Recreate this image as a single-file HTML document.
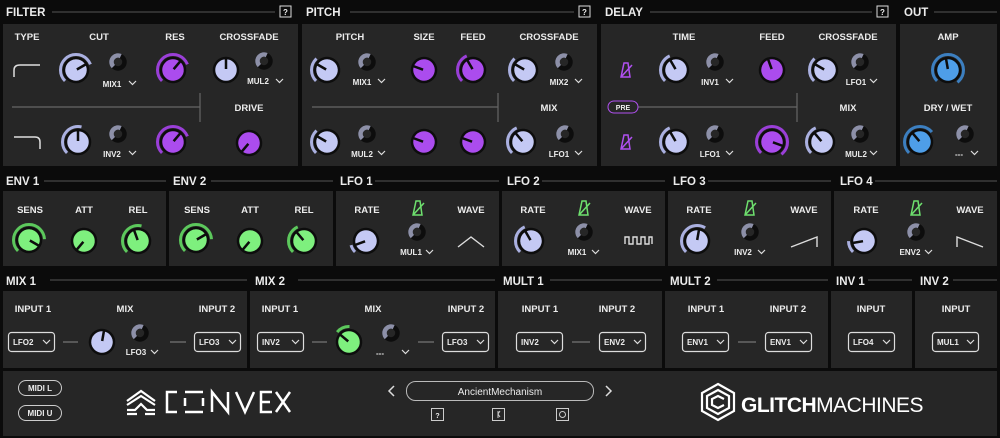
<!DOCTYPE html><html><head><style>body{margin:0;background:#0b0b0b}svg{display:block}text{font-family:"Liberation Sans",sans-serif;font-weight:bold;fill:#ececec}.l{font-size:9.5px;text-anchor:middle}.h{font-size:11.5px}.s{font-size:8px;text-anchor:middle}</style></head><body>
<svg width="1000" height="438" viewBox="0 0 1000 438">
<defs>
<g id="bL"><circle r="12" fill="#c4c9f4" stroke="#0d0d0d" stroke-width="2.5"/><line y1="-1" y2="-11" stroke="#0d0d0d" stroke-width="2.5"/></g>
<g id="bP"><circle r="12" fill="#ab4cee" stroke="#0d0d0d" stroke-width="2.5"/><line y1="-1" y2="-11" stroke="#0d0d0d" stroke-width="2.5"/></g>
<g id="bG"><circle r="12" fill="#7ef07e" stroke="#0d0d0d" stroke-width="2.5"/><line y1="-1" y2="-11" stroke="#0d0d0d" stroke-width="2.5"/></g>
<g id="bB"><circle r="12" fill="#4e9ee8" stroke="#0d0d0d" stroke-width="2.5"/><line y1="-1" y2="-11" stroke="#0d0d0d" stroke-width="2.5"/></g>
<g id="m"><circle r="6.5" fill="none" stroke="#0d0d0d" stroke-width="4.5"/><circle r="6.5" fill="none" stroke="#8d90a8" stroke-width="4.5" stroke-dasharray="18 40" transform="rotate(135)"/></g>
<g id="dd"><rect x="0.5" y="0.5" width="46" height="19" rx="3" fill="none" stroke="#ddd" stroke-width="1.2"/><path d="M35 8l3.5 3.5 3.5-3.5" fill="none" stroke="#ddd" stroke-width="1.2"/></g>
<g id="sync"><path d="M-5 7 L-2 -7 H2 L4 7 Z M-4 6 L6 -5" fill="none" stroke-width="1.5"/></g>
<g id="chev"><path d="M0 0l3.5 3.5 3.5-3.5" fill="none" stroke="#ddd" stroke-width="1.2"/></g>
</defs>
<rect width="1000" height="438" fill="#0b0b0b"/>
<g fill="#262626">
<rect x="3" y="24" width="295" height="142"/><rect x="302" y="24" width="295" height="142"/><rect x="601" y="24" width="295" height="142"/><rect x="900" y="24" width="97" height="142"/>
<rect x="3" y="191" width="163" height="75"/><rect x="169" y="191" width="164" height="75"/><rect x="336" y="191" width="163" height="75"/><rect x="502" y="191" width="163" height="75"/><rect x="668" y="191" width="163" height="75"/><rect x="834" y="191" width="163" height="75"/>
<rect x="3" y="291" width="244" height="77"/><rect x="250" y="291" width="245" height="77"/><rect x="498" y="291" width="164" height="77"/><rect x="665" y="291" width="163" height="77"/><rect x="831" y="291" width="81" height="77"/><rect x="915" y="291" width="82" height="77"/>
<rect x="3" y="371" width="994" height="65"/>
</g>
<g stroke="#555" stroke-width="1">
<line x1="52" y1="12" x2="275" y2="12"/><line x1="350" y1="12" x2="574" y2="12"/><line x1="650" y1="12" x2="872" y2="12"/><line x1="934" y1="12" x2="997" y2="12"/>
<line x1="44" y1="181" x2="166" y2="181"/><line x1="211" y1="181" x2="333" y2="181"/><line x1="375" y1="181" x2="499" y2="181"/><line x1="542" y1="181" x2="665" y2="181"/><line x1="708" y1="181" x2="831" y2="181"/><line x1="875" y1="181" x2="997" y2="181"/>
<line x1="50" y1="280" x2="247" y2="280"/><line x1="298" y1="280" x2="495" y2="280"/><line x1="550" y1="280" x2="662" y2="280"/><line x1="717" y1="280" x2="828" y2="280"/><line x1="868" y1="280" x2="912" y2="280"/><line x1="953" y1="280" x2="997" y2="280"/>
</g>
<g class="h"><text class="h" x="6" y="16">FILTER</text><text class="h" x="306" y="16">PITCH</text><text class="h" x="605" y="16">DELAY</text><text class="h" x="904" y="16">OUT</text>
<text class="h" x="6" y="185">ENV 1</text><text class="h" x="173" y="185">ENV 2</text><text class="h" x="340" y="185">LFO 1</text><text class="h" x="507" y="185">LFO 2</text><text class="h" x="673" y="185">LFO 3</text><text class="h" x="840" y="185">LFO 4</text>
<text class="h" x="6" y="285">MIX 1</text><text class="h" x="255" y="285">MIX 2</text><text class="h" x="503" y="285">MULT 1</text><text class="h" x="670" y="285">MULT 2</text><text class="h" x="836" y="285">INV 1</text><text class="h" x="920" y="285">INV 2</text></g>
<g fill="#0b0b0b" stroke="#ddd"><rect x="280" y="6" width="11" height="11"/><rect x="579" y="6" width="11" height="11"/><rect x="877" y="6" width="11" height="11"/></g>
<text class="s" x="285.5" y="15">?</text><text class="s" x="584.5" y="15">?</text><text class="s" x="882.5" y="15">?</text>
<!-- FILTER -->
<text class="l" x="27" y="40">TYPE</text><text class="l" x="99" y="40">CUT</text><text class="l" x="175" y="40">RES</text><text class="l" x="249" y="40">CROSSFADE</text>
<path d="M14 77 V70 Q14 65 20 65 H40" fill="none" stroke="#ddd" stroke-width="1.5"/><path d="M14 137 H35 Q40 137 40 142 V149" fill="none" stroke="#ddd" stroke-width="1.5"/>
<g stroke="#666" stroke-width="1.2"><line x1="12" y1="107" x2="200" y2="107"/><line x1="200" y1="93" x2="200" y2="122"/><line x1="312" y1="107" x2="498" y2="107"/><line x1="498" y1="93" x2="498" y2="122"/><line x1="638" y1="107" x2="797" y2="107"/><line x1="797" y1="93" x2="797" y2="122"/></g>
<text class="l" x="249" y="111">DRIVE</text>
<circle cx="76" cy="70" r="15.5" fill="none" stroke="#aab0e0" stroke-width="3" stroke-dasharray="55 200" transform="rotate(135 76 70)"/><use href="#bL" transform="translate(76 70) rotate(60)"/>
<use href="#m" x="118" y="62"/><text class="s" x="112" y="87">MIX1</text><use href="#chev" x="129" y="81"/>
<circle cx="173" cy="70" r="15.5" fill="none" stroke="#9a3fd8" stroke-width="3" stroke-dasharray="55 200" transform="rotate(135 173 70)"/><use href="#bP" transform="translate(173 70) rotate(40)"/>
<use href="#bL" transform="translate(226 70)"/><use href="#m" x="264" y="61"/><text class="s" x="258" y="84">MUL2</text><use href="#chev" x="276" y="79"/>
<circle cx="78" cy="142" r="15.5" fill="none" stroke="#aab0e0" stroke-width="3" stroke-dasharray="40 200" transform="rotate(135 78 142)"/><use href="#bL" transform="translate(78 142)"/>
<use href="#m" x="118" y="134"/><text class="s" x="112" y="157">INV2</text><use href="#chev" x="129" y="151"/>
<circle cx="173" cy="142" r="15.5" fill="none" stroke="#9a3fd8" stroke-width="3" stroke-dasharray="55 200" transform="rotate(135 173 142)"/><use href="#bP" transform="translate(173 142) rotate(40)"/>
<use href="#bP" transform="translate(249 143) rotate(-140)"/>
<!-- PITCH -->
<text class="l" x="350" y="40">PITCH</text><text class="l" x="424" y="40">SIZE</text><text class="l" x="473" y="40">FEED</text><text class="l" x="549" y="40">CROSSFADE</text>
<circle cx="327" cy="70" r="15.5" fill="none" stroke="#aab0e0" stroke-width="3" stroke-dasharray="25 200" transform="rotate(135 327 70)"/><use href="#bL" transform="translate(327 70) rotate(-60)"/>
<use href="#m" x="367" y="62"/><text class="s" x="362" y="85">MIX1</text><use href="#chev" x="378" y="79"/>
<use href="#bP" transform="translate(424 70) rotate(-70)"/><circle cx="473" cy="70" r="15.5" fill="none" stroke="#9a3fd8" stroke-width="3" stroke-dasharray="30 200" transform="rotate(135 473 70)"/><use href="#bP" transform="translate(473 70) rotate(-30)"/>
<circle cx="525" cy="70" r="15.5" fill="none" stroke="#aab0e0" stroke-width="3" stroke-dasharray="25 200" transform="rotate(135 525 70)"/><use href="#bL" transform="translate(525 70) rotate(-60)"/>
<use href="#m" x="564" y="62"/><text class="s" x="559" y="85">MIX2</text><use href="#chev" x="575" y="79"/>
<text class="l" x="549" y="111">MIX</text>
<circle cx="327" cy="142" r="15.5" fill="none" stroke="#aab0e0" stroke-width="3" stroke-dasharray="25 200" transform="rotate(135 327 142)"/><use href="#bL" transform="translate(327 142) rotate(-60)"/>
<use href="#m" x="367" y="134"/><text class="s" x="362" y="157">MUL2</text><use href="#chev" x="378" y="151"/>
<use href="#bP" transform="translate(424 142) rotate(-70)"/><use href="#bP" transform="translate(473 142) rotate(-70)"/>
<circle cx="523" cy="142" r="15.5" fill="none" stroke="#aab0e0" stroke-width="3" stroke-dasharray="30 200" transform="rotate(135 523 142)"/><use href="#bL" transform="translate(523 142) rotate(-40)"/>
<use href="#m" x="565" y="134"/><text class="s" x="559" y="157">LFO1</text><use href="#chev" x="575" y="151"/>
<!-- DELAY -->
<text class="l" x="684" y="40">TIME</text><text class="l" x="772" y="40">FEED</text><text class="l" x="848" y="40">CROSSFADE</text>
<use href="#sync" x="626" y="70" stroke="#b050f0"/><use href="#sync" x="626" y="142" stroke="#b050f0"/>
<circle cx="676" cy="70" r="15.5" fill="none" stroke="#aab0e0" stroke-width="3" stroke-dasharray="30 200" transform="rotate(135 676 70)"/><use href="#bL" transform="translate(676 70) rotate(-30)"/>
<use href="#m" x="715" y="62"/><text class="s" x="710" y="85">INV1</text><use href="#chev" x="726" y="79"/>
<use href="#bP" transform="translate(772 70) rotate(-20)"/>
<circle cx="825" cy="70" r="15.5" fill="none" stroke="#aab0e0" stroke-width="3" stroke-dasharray="25 200" transform="rotate(135 825 70)"/><use href="#bL" transform="translate(825 70) rotate(-60)"/>
<use href="#m" x="860" y="62"/><text class="s" x="856" y="85">LFO1</text><use href="#chev" x="870" y="79"/>
<rect x="608" y="101" width="30" height="12" rx="6" fill="none" stroke="#b050f0"/><text class="s" x="623" y="110" style="font-size:7px">PRE</text>
<text class="l" x="848" y="111">MIX</text>
<circle cx="676" cy="142" r="15.5" fill="none" stroke="#aab0e0" stroke-width="3" stroke-dasharray="30 200" transform="rotate(135 676 142)"/><use href="#bL" transform="translate(676 142) rotate(-30)"/>
<use href="#m" x="715" y="134"/><text class="s" x="710" y="157">LFO1</text><use href="#chev" x="726" y="151"/>
<circle cx="772" cy="142" r="15.5" fill="none" stroke="#9a3fd8" stroke-width="3" stroke-dasharray="75 200" transform="rotate(135 772 142)"/><use href="#bP" transform="translate(772 142) rotate(110)"/>
<circle cx="822" cy="142" r="15.5" fill="none" stroke="#aab0e0" stroke-width="3" stroke-dasharray="30 200" transform="rotate(135 822 142)"/><use href="#bL" transform="translate(822 142) rotate(-40)"/>
<use href="#m" x="860" y="134"/><text class="s" x="856" y="157">MUL2</text><use href="#chev" x="870" y="151"/>
<!-- OUT -->
<text class="l" x="948" y="40">AMP</text><text class="l" x="948" y="111">DRY / WET</text>
<circle cx="948" cy="70" r="15.5" fill="none" stroke="#3c7fc0" stroke-width="3" stroke-dasharray="75 200" transform="rotate(135 948 70)"/><use href="#bB" transform="translate(948 70) rotate(-10)"/>
<circle cx="920" cy="142" r="15.5" fill="none" stroke="#3c7fc0" stroke-width="3" stroke-dasharray="50 200" transform="rotate(135 920 142)"/><use href="#bB" transform="translate(920 142) rotate(-40)"/>
<use href="#m" x="965" y="134"/><text class="s" x="959" y="157">---</text><use href="#chev" x="971" y="151"/>
<!-- ENV -->
<text class="l" x="30" y="213">SENS</text><text class="l" x="84" y="213">ATT</text><text class="l" x="138" y="213">REL</text>
<text class="l" x="197" y="213">SENS</text><text class="l" x="250" y="213">ATT</text><text class="l" x="304" y="213">REL</text>
<circle cx="29" cy="240" r="15.5" fill="none" stroke="#5cc85c" stroke-width="3" stroke-dasharray="60 200" transform="rotate(135 29 240)"/><use href="#bG" transform="translate(29 240) rotate(120)"/>
<use href="#bG" transform="translate(84 241) rotate(-140)"/>
<circle cx="138" cy="241" r="15.5" fill="none" stroke="#5cc85c" stroke-width="3" stroke-dasharray="40 200" transform="rotate(135 138 241)"/><use href="#bG" transform="translate(138 241) rotate(-20)"/>
<circle cx="196" cy="240" r="15.5" fill="none" stroke="#5cc85c" stroke-width="3" stroke-dasharray="60 200" transform="rotate(135 196 240)"/><use href="#bG" transform="translate(196 240) rotate(60)"/>
<use href="#bG" transform="translate(250 241) rotate(-140)"/>
<circle cx="304" cy="241" r="15.5" fill="none" stroke="#5cc85c" stroke-width="3" stroke-dasharray="30 200" transform="rotate(135 304 241)"/><use href="#bG" transform="translate(304 241) rotate(-40)"/>
<!-- LFOs -->
<text class="l" x="367" y="213">RATE</text><text class="l" x="471" y="213">WAVE</text><text class="l" x="533" y="213">RATE</text><text class="l" x="638" y="213">WAVE</text>
<text class="l" x="699" y="213">RATE</text><text class="l" x="804" y="213">WAVE</text><text class="l" x="866" y="213">RATE</text><text class="l" x="970" y="213">WAVE</text>
<use href="#sync" x="418" y="208" stroke="#6ee06e"/><use href="#sync" x="584" y="208" stroke="#6ee06e"/><use href="#sync" x="750" y="208" stroke="#6ee06e"/><use href="#sync" x="916" y="208" stroke="#6ee06e"/>
<circle cx="366" cy="241" r="15.5" fill="none" stroke="#aab0e0" stroke-width="3" stroke-dasharray="8 200" transform="rotate(135 366 241)"/><use href="#bL" transform="translate(366 241) rotate(-110)"/>
<circle cx="531" cy="241" r="15.5" fill="none" stroke="#aab0e0" stroke-width="3" stroke-dasharray="30 200" transform="rotate(135 531 241)"/><use href="#bL" transform="translate(531 241) rotate(-30)"/>
<circle cx="697" cy="241" r="15.5" fill="none" stroke="#aab0e0" stroke-width="3" stroke-dasharray="45 200" transform="rotate(135 697 241)"/><use href="#bL" transform="translate(697 241) rotate(10)"/>
<circle cx="864" cy="241" r="15.5" fill="none" stroke="#aab0e0" stroke-width="3" stroke-dasharray="12 200" transform="rotate(135 864 241)"/><use href="#bL" transform="translate(864 241) rotate(-100)"/>
<use href="#m" x="417" y="232"/><text class="s" x="411" y="255">MUL1</text><use href="#chev" x="426" y="250"/>
<use href="#m" x="584" y="232"/><text class="s" x="577" y="255">MIX1</text><use href="#chev" x="592" y="250"/>
<use href="#m" x="750" y="232"/><text class="s" x="743" y="255">INV2</text><use href="#chev" x="758" y="250"/>
<use href="#m" x="916" y="232"/><text class="s" x="910" y="255">ENV2</text><use href="#chev" x="925" y="250"/>
<g fill="none" stroke="#ddd" stroke-width="1.4">
<path d="M458 247 L471 237 L484 247"/>
<path d="M625 244 V237 H629 V244 H633 V237 H637 V244 H641 V237 H645 V244 H649 V237 H652 V244"/>
<path d="M791 247 L817 237 V247"/>
<path d="M957 247 V237 L983 247"/>
</g>
<!-- MIX/MULT/INV -->
<text class="l" x="33" y="312">INPUT 1</text><text class="l" x="125" y="312">MIX</text><text class="l" x="217" y="312">INPUT 2</text>
<text class="l" x="280" y="312">INPUT 1</text><text class="l" x="373" y="312">MIX</text><text class="l" x="466" y="312">INPUT 2</text>
<text class="l" x="540" y="312">INPUT 1</text><text class="l" x="617" y="312">INPUT 2</text><text class="l" x="706" y="312">INPUT 1</text><text class="l" x="788" y="312">INPUT 2</text>
<text class="l" x="871" y="312">INPUT</text><text class="l" x="956" y="312">INPUT</text>
<use href="#dd" x="8" y="332"/><use href="#dd" x="194" y="332"/><use href="#dd" x="257" y="332"/><use href="#dd" x="442" y="332"/>
<use href="#dd" x="516" y="332"/><use href="#dd" x="599" y="332"/><use href="#dd" x="682" y="332"/><use href="#dd" x="765" y="332"/><use href="#dd" x="848" y="332"/><use href="#dd" x="932" y="332"/>
<g class="s" style="text-anchor:start"><text x="13" y="345">LFO2</text><text x="199" y="345">LFO3</text><text x="262" y="345">INV2</text><text x="447" y="345">LFO3</text><text x="521" y="345">INV2</text><text x="604" y="345">ENV2</text><text x="687" y="345">ENV1</text><text x="770" y="345">ENV1</text><text x="853" y="345">LFO4</text><text x="937" y="345">MUL1</text></g>
<g stroke="#888"><line x1="63" y1="342" x2="78" y2="342"/><line x1="170" y1="342" x2="186" y2="342"/><line x1="312" y1="342" x2="327" y2="342"/><line x1="418" y1="342" x2="434" y2="342"/><line x1="572" y1="342" x2="590" y2="342"/><line x1="738" y1="342" x2="756" y2="342"/></g>
<use href="#bL" transform="translate(102 342) rotate(10)"/><use href="#m" x="140" y="333"/><text class="s" x="136" y="355">LFO3</text><use href="#chev" x="151" y="350"/>
<circle cx="349" cy="342" r="15.5" fill="none" stroke="#5cc85c" stroke-width="3" stroke-dasharray="14 200" transform="rotate(220 349 342)"/><use href="#bG" transform="translate(349 342) rotate(-50)"/>
<use href="#m" x="391" y="333"/><text class="s" x="380" y="356">---</text><use href="#chev" x="402" y="350"/>
<!-- footer -->
<rect x="18.5" y="380.5" width="43" height="15" rx="7.5" fill="none" stroke="#ccc"/><text class="s" x="40" y="391">MIDI L</text>
<rect x="18.5" y="405.5" width="43" height="15" rx="7.5" fill="none" stroke="#ccc"/><text class="s" x="40" y="416">MIDI U</text>
<g fill="none" stroke="#fff" stroke-width="2.2">
<path d="M127 401 L141 391 L155 401 M127 405 L141 396 L155 405 M127 410 H135 L141 404 L147 410 H155 M127 414 H137 M145 414 H155"/>
</g>
<g fill="none" stroke="#fff" stroke-width="2.5">
<path d="M177 392 H167 V412 H177"/><path d="M185 392 H203 M185 412 H203 M185 398 V406 M203 398 V406"/>
<path d="M212 412 V392 L228 412 V392"/><path d="M236 392 L245 412 L254 392"/><path d="M272 392 H261 V412 H272 M261 402 H270"/><path d="M276 392 L290 412 M290 392 L276 412"/>
</g>
<path d="M394 386 L389 391 L394 396" fill="none" stroke="#ddd" stroke-width="1.5"/><path d="M606 386 L611 391 L606 396" fill="none" stroke="#ddd" stroke-width="1.5"/>
<rect x="406.5" y="381.5" width="187" height="19" rx="9" fill="none" stroke="#bbb"/><text x="500" y="395" class="l" style="font-size:10px;font-weight:normal">AncientMechanism</text>
<g fill="none" stroke="#ccc"><rect x="431.5" y="408.5" width="12" height="12"/><rect x="492.5" y="408.5" width="12" height="12"/><rect x="556.5" y="408.5" width="12" height="12"/><circle cx="562.5" cy="414.5" r="3"/></g>
<text class="s" x="437.5" y="418" style="font-size:7px">?</text><path d="M498 411 v7 M500 411 l-2 3 2 3" fill="none" stroke="#ccc"/>
<g fill="none" stroke="#fff" stroke-width="2.2"><path d="M718 384 L734 393 V411 L718 420 L702 411 V393 Z"/><path d="M718 390 L729 396 V408 L718 414 L707 408 V396 Z"/><path d="M724 399 L718 396 L712 399 V405 L718 408 L724 405"/></g>
<text x="741" y="412" style="font-size:21px;fill:#fff;letter-spacing:-0.5px">GLITCH<tspan style="font-weight:normal">MACHINES</tspan></text>
</svg>
</body></html>
